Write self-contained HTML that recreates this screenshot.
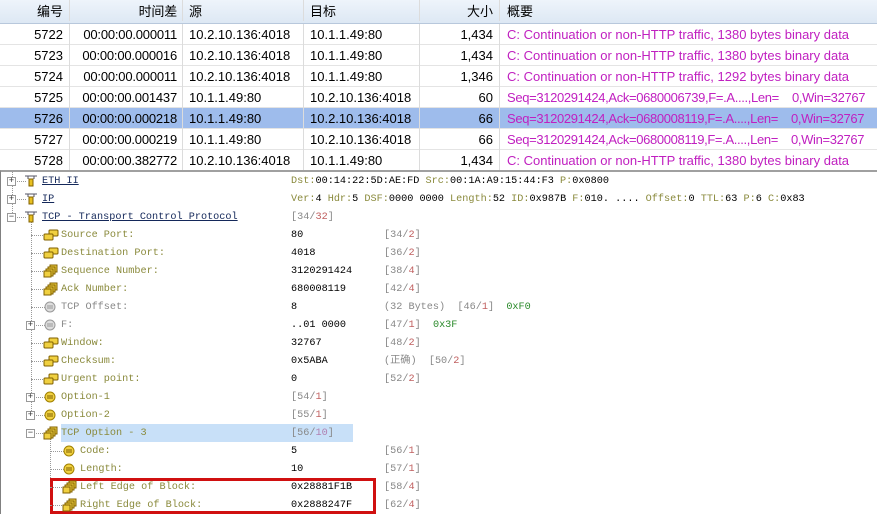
<!DOCTYPE html><html><head><meta charset="utf-8"><style>
*{margin:0;padding:0;box-sizing:border-box}
body{width:877px;height:514px;overflow:hidden;background:#fff;position:relative;font-family:"Liberation Sans","Noto Sans CJK SC",sans-serif}
.t{position:absolute;left:0;top:0;width:877px}
.r{position:absolute;left:0;width:877px;height:21px;font-size:13px;line-height:21px;border-bottom:1px solid #e4e4e4}
.r span{position:absolute;top:0;height:21px;border-right:1px solid #dcdcdc;white-space:nowrap}
.h{background:linear-gradient(#eef4fb,#dde8f4);border-bottom:1px solid #b8c8dc;height:24px;line-height:23px}
.c1{left:0;width:70px;text-align:right;padding-right:6px}
.c2{left:70px;width:113px;text-align:right;padding-right:5px;letter-spacing:-0.2px}
.c3{left:183px;width:121px;padding-left:6px}
.c4{left:304px;width:116px;padding-left:6px}
.c5{left:420px;width:80px;text-align:right;padding-right:6px}
.c6{left:500px;width:377px;padding-left:7px;color:#c020c0;border-right:none!important;overflow:hidden}
.sq{letter-spacing:-0.35px}
.sel{background:#9ebcec}
.tree{position:absolute;left:0;top:170px;width:877px;height:344px;border-top:2px solid #a0a0a0;border-left:1px solid #808080}
.n{position:absolute;height:18px;line-height:18px;padding-top:1px;font-family:"Liberation Mono",monospace;font-size:10.2px;white-space:nowrap}
.lb{color:#8a8a3c}
.lk{color:#14285a;text-decoration:underline}
.g{color:#888}.rd{color:#c06060}.gr{color:#2a8a2a}.ol{color:#8a8a3c}
.box{position:absolute;width:9px;height:9px;border:1px solid #999;background:#fff;font-size:9px;line-height:7px;text-align:center;color:#333;font-family:"Liberation Mono",monospace}
.dv{position:absolute;border-left:1px dotted #999}
.dh{position:absolute;border-top:1px dotted #999;height:0}
</style></head><body>
<div class="t">
<div class="r h" style="top:0"><span class="c1">编号</span><span class="c2">时间差</span><span class="c3">源</span><span class="c4">目标</span><span class="c5">大小</span><span class="c6" style="color:#000">概要</span></div>
<div class="r" style="top:24px"><span class="c1">5722</span><span class="c2">00:00:00.000011</span><span class="c3">10.2.10.136:4018</span><span class="c4">10.1.1.49:80</span><span class="c5">1,434</span><span class="c6">C: Continuation or non-HTTP traffic, 1380 bytes binary data</span></div>
<div class="r" style="top:45px"><span class="c1">5723</span><span class="c2">00:00:00.000016</span><span class="c3">10.2.10.136:4018</span><span class="c4">10.1.1.49:80</span><span class="c5">1,434</span><span class="c6">C: Continuation or non-HTTP traffic, 1380 bytes binary data</span></div>
<div class="r" style="top:66px"><span class="c1">5724</span><span class="c2">00:00:00.000011</span><span class="c3">10.2.10.136:4018</span><span class="c4">10.1.1.49:80</span><span class="c5">1,346</span><span class="c6">C: Continuation or non-HTTP traffic, 1292 bytes binary data</span></div>
<div class="r" style="top:87px"><span class="c1">5725</span><span class="c2">00:00:00.001437</span><span class="c3">10.1.1.49:80</span><span class="c4">10.2.10.136:4018</span><span class="c5">60</span><span class="c6 sq">Seq=3120291424,Ack=0680006739,F=.A....,Len=&nbsp;&nbsp;&nbsp;&nbsp;0,Win=32767</span></div>
<div class="r sel" style="top:108px"><span class="c1">5726</span><span class="c2">00:00:00.000218</span><span class="c3">10.1.1.49:80</span><span class="c4">10.2.10.136:4018</span><span class="c5">66</span><span class="c6 sq">Seq=3120291424,Ack=0680008119,F=.A....,Len=&nbsp;&nbsp;&nbsp;&nbsp;0,Win=32767</span></div>
<div class="r" style="top:129px"><span class="c1">5727</span><span class="c2">00:00:00.000219</span><span class="c3">10.1.1.49:80</span><span class="c4">10.2.10.136:4018</span><span class="c5">66</span><span class="c6 sq">Seq=3120291424,Ack=0680008119,F=.A....,Len=&nbsp;&nbsp;&nbsp;&nbsp;0,Win=32767</span></div>
<div class="r" style="top:150px"><span class="c1">5728</span><span class="c2">00:00:00.382772</span><span class="c3">10.2.10.136:4018</span><span class="c4">10.1.1.49:80</span><span class="c5">1,434</span><span class="c6">C: Continuation or non-HTTP traffic, 1380 bytes binary data</span></div>
</div>
<div class="tree"></div>
<div class="dv" style="left:12px;top:172px;height:45px"></div>
<div class="dv" style="left:31px;top:222px;height:195px"></div>
<div class="dv" style="left:50px;top:438px;height:68px"></div>
<div style="position:absolute;left:61px;top:424px;width:292px;height:18px;background:#c8e0f8"></div>
<div style="position:absolute;left:50px;top:478px;width:326px;height:36px;border:3px solid #d01010"></div>
<div id="nodes"></div>
<script>
var rows=[
[0,'p','<span class="lk">ETH II</span>','<span class="ol">Dst:</span>00:14:22:5D:AE:FD <span class="ol">Src:</span>00:1A:A9:15:44:F3 <span class="ol">P:</span>0x0800','','y'],
[0,'p','<span class="lk">IP</span>','<span class="ol">Ver:</span>4 <span class="ol">Hdr:</span>5 <span class="ol">DSF:</span>0000 0000 <span class="ol">Length:</span>52 <span class="ol">ID:</span>0x987B <span class="ol">F:</span>010. .... <span class="ol">Offset:</span>0 <span class="ol">TTL:</span>63 <span class="ol">P:</span>6 <span class="ol">C:</span>0x83','','y'],
[0,'m','<span class="lk">TCP - Transport Control Protocol</span>','<span class="g">[34/<span class="rd">32</span>]</span>','','y'],
[1,'','Source Port:','80','<span class="g">[34/<span class="rd">2</span>]</span>','2'],
[1,'','Destination Port:','4018','<span class="g">[36/<span class="rd">2</span>]</span>','2'],
[1,'','Sequence Number:','3120291424','<span class="g">[38/<span class="rd">4</span>]</span>','4'],
[1,'','Ack Number:','680008119','<span class="g">[42/<span class="rd">4</span>]</span>','4'],
[1,'','<span style="color:#888">TCP Offset:</span>','8','<span class="g">(32 Bytes)&nbsp;&nbsp;[46/<span class="rd">1</span>]</span>&nbsp;&nbsp;<span class="gr">0xF0</span>','c'],
[1,'p','<span style="color:#888">F:</span>','..01 0000','<span class="g">[47/<span class="rd">1</span>]</span>&nbsp;&nbsp;<span class="gr">0x3F</span>','c'],
[1,'','Window:','32767','<span class="g">[48/<span class="rd">2</span>]</span>','2'],
[1,'','Checksum:','0x5ABA','<span class="g">(正确)&nbsp;&nbsp;[50/<span class="rd">2</span>]</span>','2'],
[1,'','Urgent point:','0','<span class="g">[52/<span class="rd">2</span>]</span>','2'],
[1,'p','Option-1','<span class="g">[54/<span class="rd">1</span>]</span>','','o'],
[1,'p','Option-2','<span class="g">[55/<span class="rd">1</span>]</span>','','o'],
[1,'m','TCP Option - 3','<span class="g">[56/<span style="color:#b080b0">10</span>]</span>','','4'],
[2,'','Code:','5','<span class="g">[56/<span class="rd">1</span>]</span>','o'],
[2,'','Length:','10','<span class="g">[57/<span class="rd">1</span>]</span>','o'],
[2,'','Left Edge of Block:','0x28881F1B','<span class="g">[58/<span class="rd">4</span>]</span>','4'],
[2,'','Right Edge of Block:','0x2888247F','<span class="g">[62/<span class="rd">4</span>]</span>','4']];
var icons={
y:'<svg width="14" height="14"><path d="M1 2h12M4 2v3M10 2v3" stroke="#556" fill="none"/><rect x="5" y="5" width="4" height="7" fill="#e8c020" stroke="#806000"/></svg>',
'2':'<svg width="16" height="14"><rect x="6" y="2" width="9" height="6" rx="1" fill="#f0d040" stroke="#806000"/><rect x="1" y="6" width="9" height="6" rx="1" fill="#f0d040" stroke="#806000"/></svg>',
'4':'<svg width="16" height="14"><rect x="7" y="1" width="7" height="7" fill="#f0d040" stroke="#806000"/><rect x="5" y="3" width="7" height="7" fill="#f0d040" stroke="#806000"/><rect x="3" y="5" width="7" height="7" fill="#f0d040" stroke="#806000"/><rect x="1" y="7" width="7" height="6" fill="#f0d040" stroke="#806000"/></svg>',
c:'<svg width="14" height="14"><circle cx="7" cy="7" r="5" fill="#ddd" stroke="#999"/><path d="M4 6h6M4 8h6" stroke="#999"/></svg>',
o:'<svg width="14" height="14"><circle cx="7" cy="7" r="5" fill="#f0d040" stroke="#a08000"/><path d="M4 6h6M4 8h6" stroke="#806000"/></svg>'};
var h='';
rows.forEach(function(r,i){
 var top=172+i*18, lv=r[0], bx=7+lv*19, lab=42+lv*19;
 if(lv==2) lab=80;
 if(r[1]) h+='<div class="box" style="left:'+bx+'px;top:'+(top+5)+'px">'+(r[1]=='p'?'+':'−')+'</div>';
 h+='<div class="dh" style="left:'+(bx+(r[1]?10:5))+'px;top:'+(top+9)+'px;width:'+(lab-16-bx-(r[1]?10:5))+'px"></div>';
 h+='<div style="position:absolute;left:'+(lab-18)+'px;top:'+(top+2)+'px">'+icons[r[5]]+'</div>';
 h+='<div class="n lb" style="left:'+lab+'px;top:'+top+'px">'+r[2]+'</div>';
 if(r[5]=='o'&&lv==1||i<3||i==14){h+='<div class="n" style="left:291px;top:'+top+'px">'+r[3]+'</div>';}
 else{h+='<div class="n" style="left:291px;top:'+top+'px">'+r[3]+'</div><div class="n" style="left:384px;top:'+top+'px">'+r[4]+'</div>';}
});
document.getElementById('nodes').innerHTML=h;
</script>
</body></html>
